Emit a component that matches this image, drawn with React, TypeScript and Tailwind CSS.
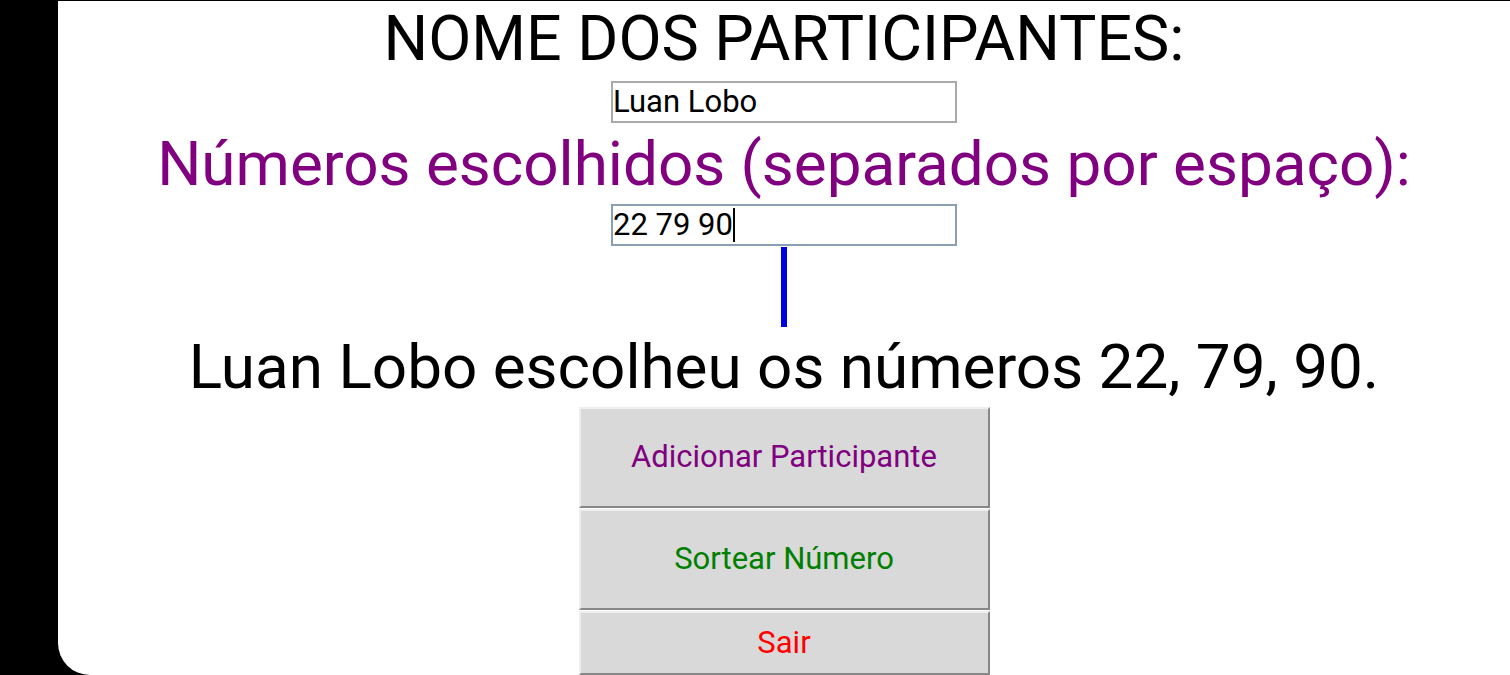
import React from "react";

export default function App() {
  const font = { fontFamily: "Roboto, 'Noto Sans', sans-serif" };
  return (
    <div className="w-[1510px] h-[675px] bg-black flex overflow-hidden" style={font}>
      <div className="w-[58px] shrink-0" />
      <div className="flex-1 mt-px bg-white rounded-bl-[32px] flex flex-col items-center overflow-hidden">
        <div className="h-[80px] text-[62.7px] leading-[75px] text-black whitespace-nowrap">
          NOME DOS PARTICIPANTES:
        </div>
        <div className="w-[346px] h-[42px] border-2 border-[#aaaaaa] pl-0 text-[31px] leading-[38px] text-black flex items-center">
          Luan Lobo
        </div>
        <div className="h-[81px] text-[62px] leading-[81px] text-[#800080] whitespace-nowrap">
          Números escolhidos (separados por espaço):
        </div>
        <div className="w-[346px] h-[42px] border-2 border-[#8a9fb3] pl-0 text-[31px] leading-[38px] text-black flex items-center">
          <span>22 79 90</span>
          <span className="inline-block w-[2px] h-[34px] bg-black" />
        </div>
        <div className="mt-px w-[6px] h-[80px] bg-[#0000e6]" />
        <div className="h-[80px] text-[62px] leading-[80px] text-black whitespace-nowrap">
          Luan Lobo escolheu os números 22, 79, 90.
        </div>
        <div className="flex flex-col gap-px w-[411px]">
          <button className="h-[101px] bg-[#d9d9d9] border-2 border-t-[#eeeeee] border-l-[#eeeeee] border-b-[#888888] border-r-[#888888] text-[31px] text-[#800080]">
            Adicionar Participante
          </button>
          <button className="h-[101px] bg-[#d9d9d9] border-2 border-t-[#eeeeee] border-l-[#eeeeee] border-b-[#888888] border-r-[#888888] text-[31px] text-[#008000]">
            Sortear Número
          </button>
          <button className="h-[64px] bg-[#d9d9d9] border-2 border-t-[#eeeeee] border-l-[#eeeeee] border-b-[#888888] border-r-[#888888] text-[31px] text-[#ff0000]">
            Sair
          </button>
        </div>
      </div>
    </div>
  );
}
